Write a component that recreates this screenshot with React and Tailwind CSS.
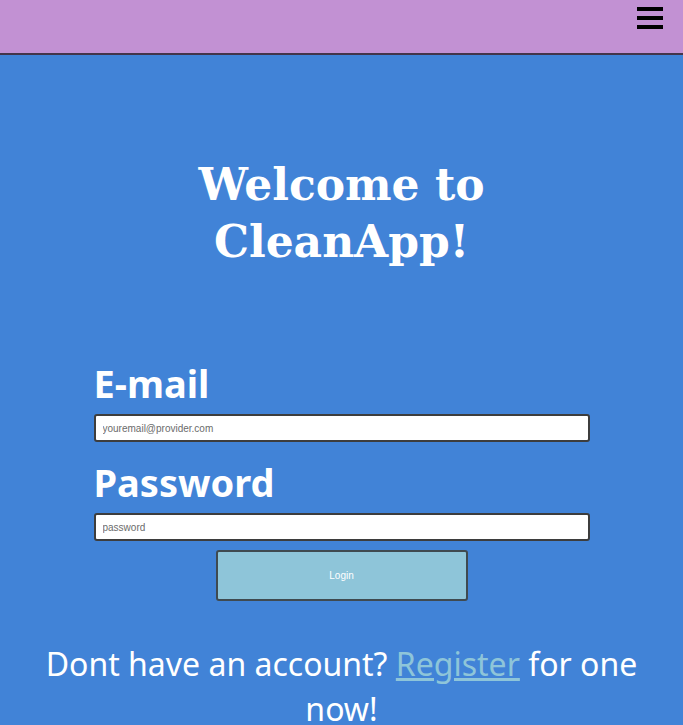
import { useState } from "react";

const Header = () => (
  <header className="h-[55px] bg-[#c291d3] border-b-2 border-[#43354a] flex justify-end">
    <button className="mt-[7px] mr-[20px] w-[26px] h-[22px] flex flex-col justify-between">
      <span className="block h-[4px] w-full bg-black" />
      <span className="block h-[4px] w-full bg-black" />
      <span className="block h-[4px] w-full bg-black" />
    </button>
  </header>
);

export default function App() {
  const [email, setEmail] = useState("");
  const [password, setPassword] = useState("");

  return (
    <div className="min-h-[725px] bg-[#4183d7] font-['Noto_Sans',sans-serif]">
      <Header />

      {/* Title */}
      <h1 className="mt-[101px] text-center text-white font-bold text-[44px] leading-[57px] font-['DejaVu_Serif',serif]">
        Welcome to
        <br />
        CleanApp!
      </h1>

      {/* Login form */}
      <form className="w-[496px] mx-auto mt-[87px] flex flex-col" onSubmit={(e) => e.preventDefault()}>
        <label className="text-white font-bold text-[38px] leading-[52px]">E-mail</label>
        <input
          type="email"
          value={email}
          onChange={(e) => setEmail(e.target.value)}
          placeholder="youremail@provider.com"
          className="mt-[5px] h-[28px] bg-white border-2 border-[#3d3d3d] rounded-[3px] px-[7px] text-[10px] font-['Liberation_Sans',sans-serif] placeholder:text-[#6b6b6b] outline-none"
        />
        <label className="mt-[14px] text-white font-bold text-[38px] leading-[52px]">Password</label>
        <input
          type="password"
          value={password}
          onChange={(e) => setPassword(e.target.value)}
          placeholder="password"
          className="mt-[5px] h-[28px] bg-white border-2 border-[#3d3d3d] rounded-[3px] px-[7px] text-[10px] font-['Liberation_Sans',sans-serif] placeholder:text-[#6b6b6b] outline-none"
        />
        <button
          type="submit"
          className="self-center mt-[9px] w-[252px] h-[51px] bg-[#8ec5d9] border-2 border-[#3f4a50] rounded-[3px] text-white text-[10px] font-['Liberation_Sans',sans-serif]"
        >
          Login
        </button>
      </form>

      <p className="mt-[40px] px-[30px] text-center text-white text-[32px] leading-[45px]">
        Dont have an account?{" "}
        <a href="#" className="text-[#8ec5d9] underline">
          Register
        </a>{" "}
        for one now!
      </p>
    </div>
  );
}
